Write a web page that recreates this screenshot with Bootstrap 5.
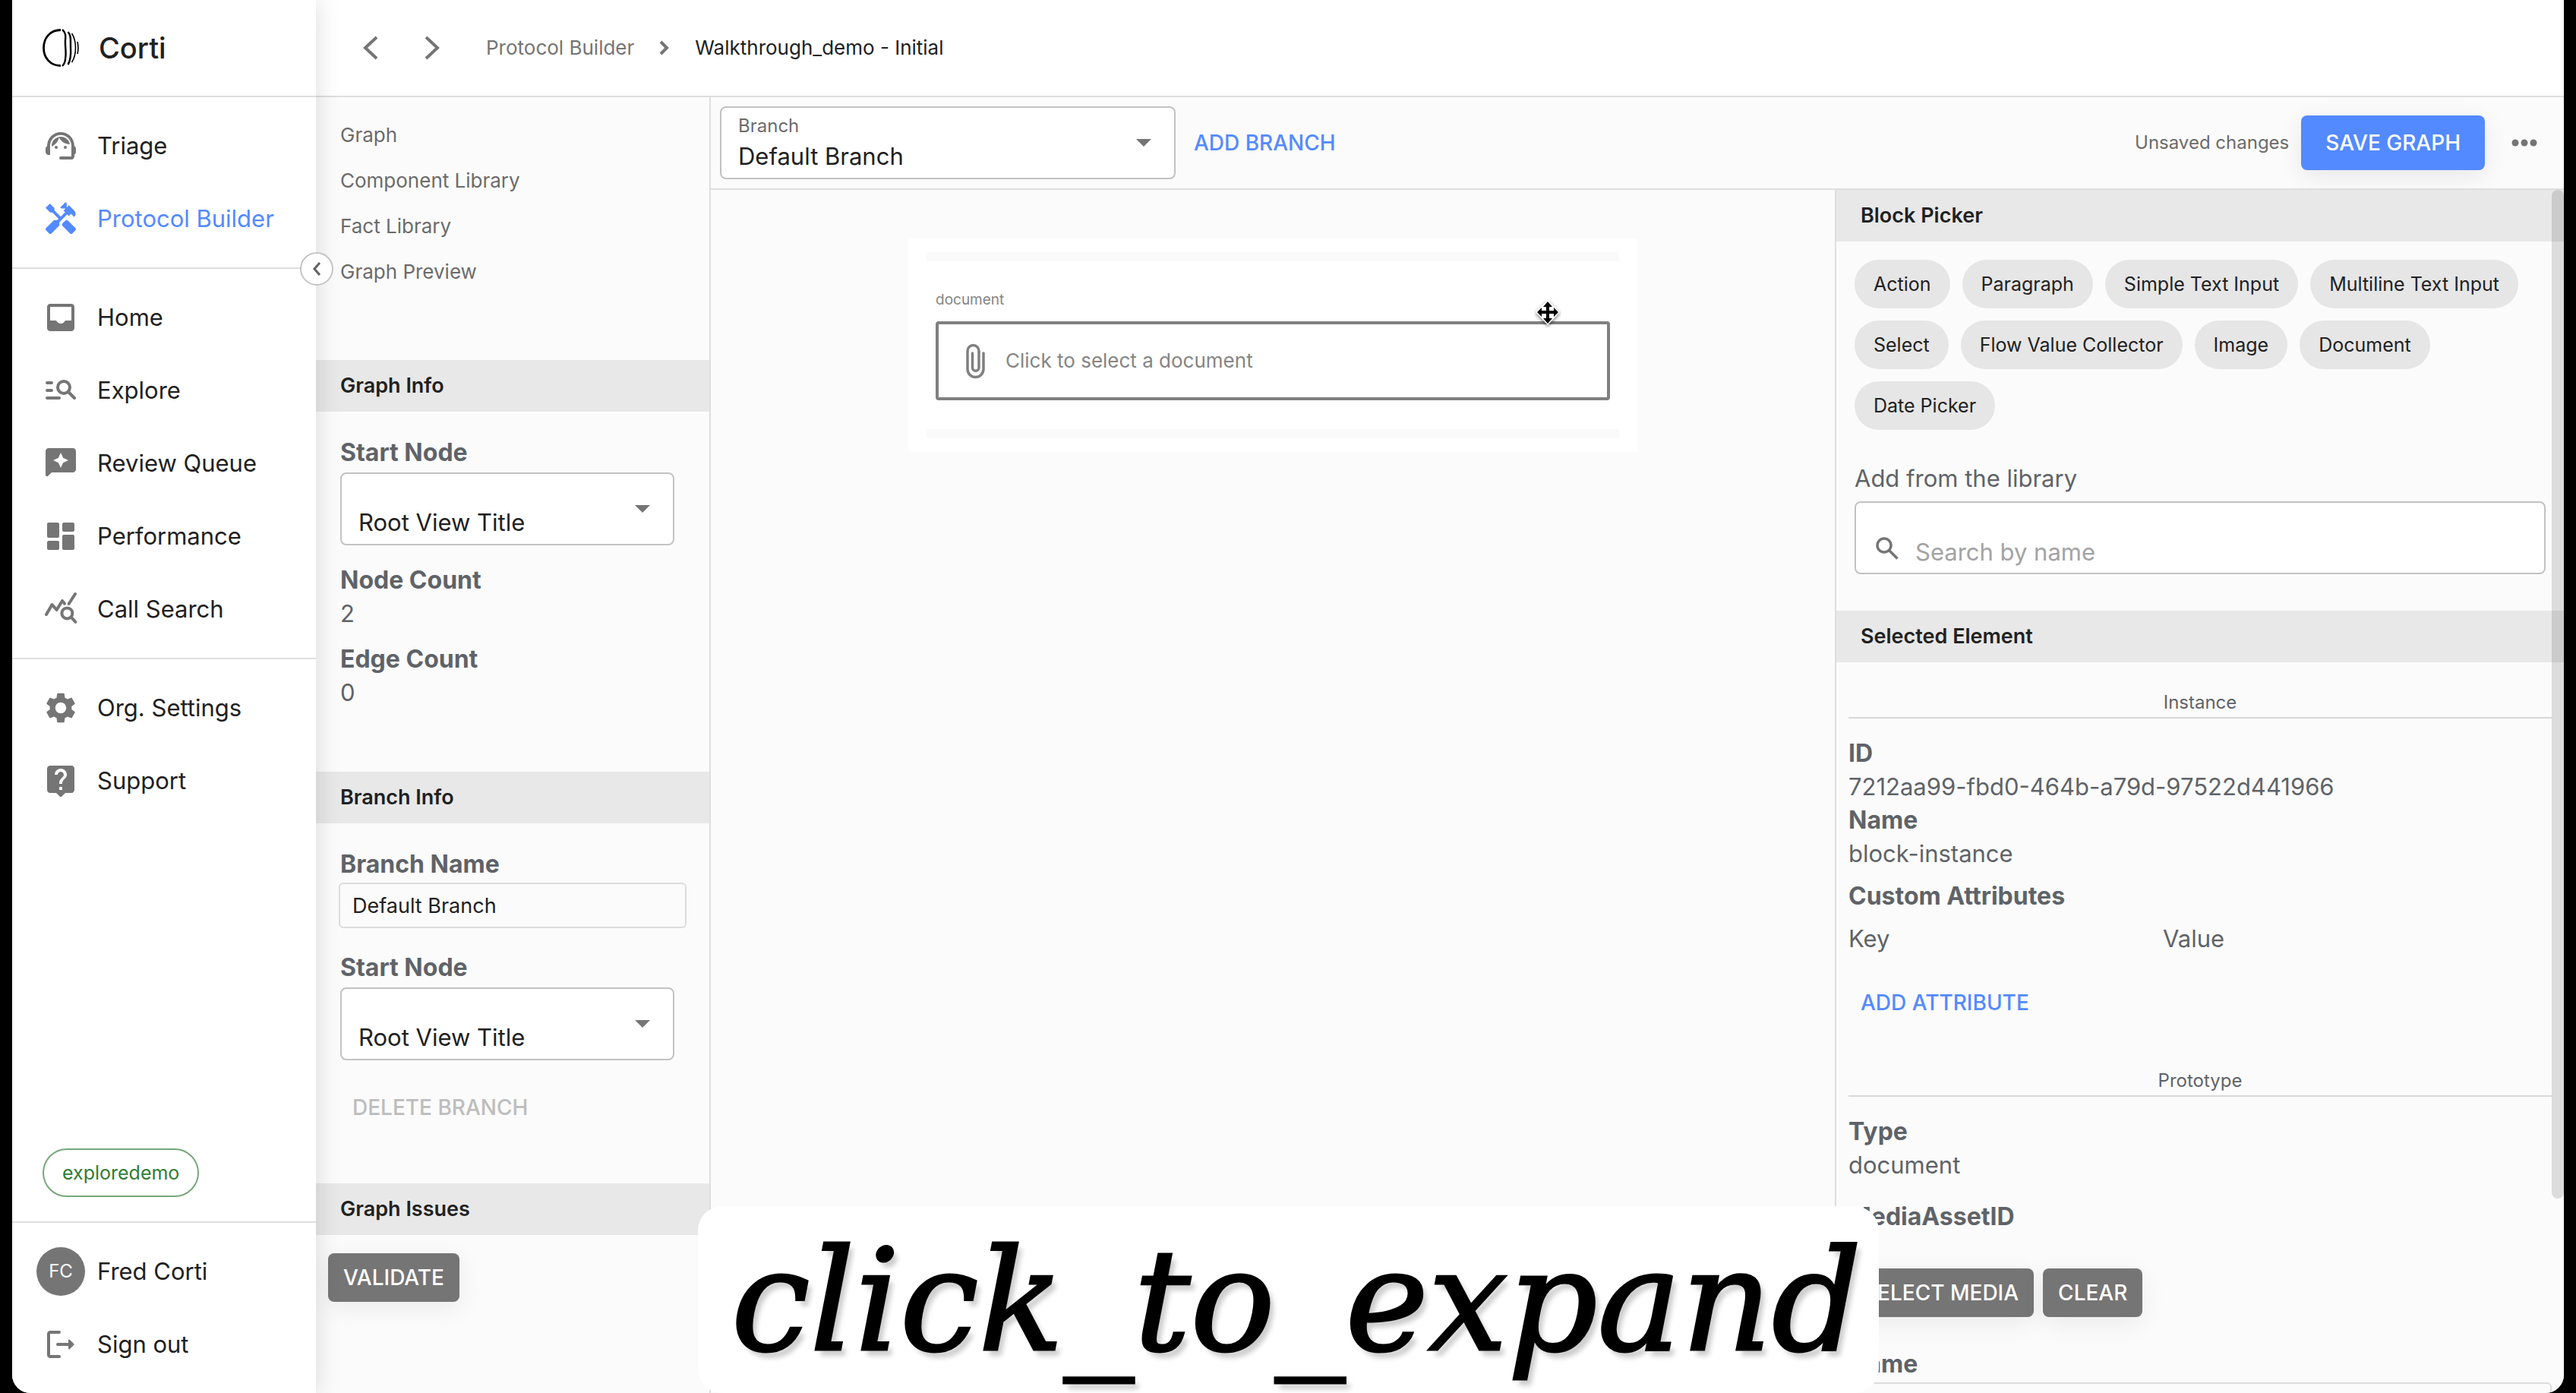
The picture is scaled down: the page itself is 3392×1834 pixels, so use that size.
<!DOCTYPE html>
<html lang="en">
<head>
<meta charset="utf-8">
<meta name="viewport" content="width=device-width, initial-scale=1">
<title>Corti - Protocol Builder</title>
<link href="https://cdn.jsdelivr.net/npm/bootstrap@5.3.0/dist/css/bootstrap.min.css" rel="stylesheet">
<style>
  :root { --ink: #212121; --muted: #757575; --slate: #5f6368; --line: #dedede; --bar: #e8e8e8; --paper: #fbfbfb; --accent: #548aff; }
  body { background: #000; color: var(--ink); font-family: Inter, "Liberation Sans", sans-serif; font-size: 31px; line-height: 44px; }
  a { text-decoration: none; color: inherit; }
  .app { height: 100vh; background: #fff; border-radius: 0 0 24px 24px; }
  .ic { width: 48px; height: 48px; fill: var(--muted); flex: none; }

  /* main navigation */
  .side { width: 400px; z-index: 3; background: #fff; box-shadow: 0 0 32px rgba(0,0,0,.14); }
  .brand { height: 128px; padding: 0 40px; gap: 26px; border-bottom: 2px solid var(--line); font-size: 38px; font-weight: 500; }
  .brand svg { width: 48px; height: 52px; }
  .group { padding: 16px 0; border-bottom: 2px solid var(--line); }
  .account { padding: 16px 0; border-top: 2px solid var(--line); }
  .item { height: 96px; padding: 0 40px; gap: 24px; }
  .item.active { color: var(--accent); }
  .item.active .ic { fill: var(--accent); }
  .tenant { height: 64px; margin: 0 40px 32px; padding: 0 24px; border: 2px solid #76a879; border-radius: 32px; color: #2e7d32; font-size: 25px; }
  .face { width: 64px; height: 64px; margin: 0 -8px; background: var(--muted); color: #fff; font-size: 24px; }
  .collapser { right: -23px; top: 332px; width: 44px; height: 44px; padding: 0; background: #fff; border: 2px solid #c4c4c4; }

  /* top bar */
  .topbar { height: 128px; padding: 0 48px; border-bottom: 2px solid var(--line); font-size: 26px; }
  .icon-btn { padding: 0; border: 0; background: none; line-height: 0; }

  /* shared pieces */
  .pane { background: var(--paper); }
  .bar { height: 68px; padding-left: 32px; background: var(--bar); font-size: 27px; font-weight: 600; line-height: 68px; margin: 0; }
  .field-name { display: block; color: var(--slate); font-size: 32px; font-weight: 700; }
  .value { color: var(--slate); }
  .box { width: 100%; height: 96px; padding: 44px 24px 8px 22px; border: 2px solid #c2c2c2; border-radius: 8px; color: var(--ink); font-size: 31px; line-height: 40px; background-color: #fff; }
  select.box { appearance: none; background-image: url("data:image/svg+xml,%3Csvg xmlns='http://www.w3.org/2000/svg' viewBox='0 0 20 10'%3E%3Cpath fill='%23757575' d='M0 0h20L10 10z'/%3E%3C/svg%3E"); background-repeat: no-repeat; background-size: 20px 10px; background-position: right 30px center; }
  .act { height: 64px; padding: 0 20px; border: 0; border-radius: 8px; font-size: 28px; font-weight: 500; line-height: 64px; }
  .act-link { padding: 0 16px; background: none; color: var(--accent); }
  .act-link:disabled { color: #bdbdbd; }
  .act-gray { background: var(--muted); color: #fff; box-shadow: 0 8px 32px rgba(0,0,0,.07); }
  .act-main { height: 72px; padding: 0 32px; background: var(--accent); color: #fff; box-shadow: 0 8px 32px rgba(0,0,0,.08); }

  /* left pane */
  .left { width: 520px; border-right: 2px solid var(--line); }
  .left nav { padding: 20px 32px 86px; color: #6b6b6b; font-size: 26px; }
  .left nav a { line-height: 60px; }
  .sect { padding: 32px 46px 0 32px; }
  .text-in { height: 60px; padding: 0 16px; border: 2px solid #dcdcdc; border-radius: 6px; background: none; color: var(--ink); font-size: 27px; }

  /* editor */
  .tools { height: 122px; padding: 0 24px 0 12px; border-bottom: 2px solid var(--line); }
  .branch { width: 600px; }
  .branch label { left: 24px; top: 10px; color: #6b6b6b; font-size: 24px; line-height: 32px; }
  .status { color: #6b6b6b; font-size: 24px; }
  .canvas { padding: 64px 0 0; }
  .sheet { width: 960px; padding: 18px 24px; background: #fff; border-radius: 4px; color: #858585; }
  .slot { height: 12px; background: #fafafa; }
  .doc { padding: 36px 12px 38px; }
  .doc label { display: block; font-size: 19px; line-height: 30px; margin-bottom: 13px; }
  .picker { width: 100%; height: 104px; padding: 0 32px; gap: 24px; background: #fff; border: 4px solid #808080; border-radius: 4px; color: #858585; font-size: 26px; }
  .pointer { left: 2004px; top: 392px; width: 36px; height: 40px; z-index: 4; }

  /* right pane */
  .right { width: 960px; border-left: 2px solid var(--line); }
  .chips { padding: 24px 24px 0; gap: 16px; }
  .pill { height: 64px; padding: 0 25px; border: 0; border-radius: 32px; background: #e6e6e6; color: var(--ink); font-size: 25px; }
  .lib { padding: 42px 24px 48px; color: var(--slate); }
  .lib .box { padding-left: 78px; }
  .lib .box::placeholder { color: #a3a3a3; opacity: 1; }
  .lib svg { left: 24px; bottom: 14px; width: 38px; height: 38px; }
  .detail { padding: 0 16px; color: var(--slate); }
  .split { margin: 0 0 24px; padding-bottom: 2px; border-bottom: 2px solid #d8d8d8; font-size: 24px; font-weight: 400; line-height: 34px; text-align: center; }
  .attrs { table-layout: fixed; }
  .attrs th { padding: 0; font-weight: 400; }
  .attrs th:first-child { width: 414px; }
  .thumb { right: 0; top: 250px; width: 16px; height: 1328px; background: rgba(0,0,0,.12); border-radius: 8px; }

  /* caption laid over the page */
  .caption-card { left: 903px; bottom: 0; height: 246px; padding: 0 22px 0 44px; border-radius: 32px; background: #fff; z-index: 5; font-family: "DejaVu Serif", serif; font-style: italic; font-size: 185px; line-height: 250px; color: #000; -webkit-text-stroke: 3px #000; text-shadow: 6px 8px 6px rgba(0,0,0,.2); }
</style>
<script src="https://cdn.jsdelivr.net/npm/bootstrap@5.3.0/dist/js/bootstrap.bundle.min.js"></script>
</head>
<body>
<div class="app position-relative d-flex mx-3 overflow-hidden">

  <aside class="side position-relative d-flex flex-column flex-shrink-0">
    <div class="brand d-flex align-items-center flex-shrink-0">
      <svg viewBox="0 0 48 52" fill="none" stroke="#000"><path d="M24 2.500C10 2.500 1.500 13 1.500 26S10 49.500 24 49.500" stroke-width="2.800"/><path d="M26 2c5 4 4.500 9 4 14s1 14 .5 20-.5 10-4.500 14" stroke-width="2.400"/><path d="M33.500 5c5 5 3 12 3.500 20s.5 17-3.500 23" stroke-width="2.400"/><path d="M38.500 7c4 6 5 11 5 19s-1 13-5 19" stroke-width="1.600"/><path d="M46 18c1.300 6 1.300 11 0 16" stroke-width="1.600"/></svg>
      <span>Corti</span>
    </div>
    <nav class="group d-flex flex-column">
      <a href="#" class="item d-flex align-items-center"><svg class="ic" viewBox="0 0 24 24"><path d="M21 12.220C21 6.730 16.740 3 12 3c-4.690 0-9 3.650-9 9.280-.6.340-1 .980-1 1.720v2c0 1.100.9 2 2 2h1v-6.100c0-3.870 3.130-7 7-7s7 3.130 7 7V19h-7a1 1 0 0 0 0 2h7c1.100 0 2-.9 2-2v-1.220c.59-.31 1-.92 1-1.640v-2.300c0-.7-.41-1.310-1-1.620z"/><circle cx="9" cy="13" r="1"/><circle cx="15" cy="13" r="1"/><path d="M18 11.030C17.520 8.180 15.040 6 12.050 6c-3.030 0-6.290 2.510-6.030 6.450 2.470-1.010 4.330-3.210 4.860-5.890 1.310 2.630 4 4.440 7.120 4.470z"/></svg>Triage</a>
      <a href="#" class="item active d-flex align-items-center"><svg class="ic" viewBox="0 0 24 24"><path d="m21.670 18.170-5.300-5.300h-.99l-2.540 2.540v.99l5.300 5.300c.39.390 1.020.390 1.410 0l2.120-2.120c.39-.38.390-1.020 0-1.410z"/><path d="m17.340 10.190 1.410-1.410 2.120 2.120c1.170-1.170 1.170-3.070 0-4.240l-3.540-3.540-1.410 1.410V1.710l-.7-.71-3.540 3.540.71.710h2.830l-1.410 1.410 1.060 1.060-2.890 2.890-4.130-4.130V5.060L4.830 2.040 2 4.870 5.030 7.900h1.410l4.130 4.130-.85.850H7.600l-5.300 5.300c-.39.390-.39 1.020 0 1.410l2.120 2.120c.39.390 1.020.390 1.410 0l5.300-5.300v-2.120l5.150-5.150 1.060 1.050z"/></svg>Protocol Builder</a>
    </nav>
    <nav class="group d-flex flex-column">
      <a href="#" class="item d-flex align-items-center"><svg class="ic" viewBox="0 0 24 24"><path d="M19 3H5c-1.100 0-2 .9-2 2v14c0 1.100.9 2 2 2h14c1.100 0 2-.9 2-2V5c0-1.100-.9-2-2-2zm0 11h-3.560c-.36 0-.68.190-.86.500A2.990 2.990 0 0 1 12 16c-1.100 0-2.060-.6-2.580-1.500-.18-.31-.5-.5-.86-.5H5V5h14v9z"/></svg>Home</a>
      <a href="#" class="item d-flex align-items-center"><svg class="ic" viewBox="0 0 24 24" style="fill:none" stroke="#757575" stroke-width="2" stroke-linecap="round"><path d="M3 7h3M3 12h3M3 17h8M17 13l4 4"/><circle cx="14" cy="10" r="4"/></svg>Explore</a>
      <a href="#" class="item d-flex align-items-center"><svg class="ic" viewBox="0 0 24 24"><path fill-rule="evenodd" d="M20 2H4c-1.100 0-2 .9-2 2v15.600c0 .9 1.070 1.300 1.700.7L6 18h14c1.100 0 2-.9 2-2V4c0-1.100-.9-2-2-2zm-6.430 9.570L12 15l-1.570-3.430L7 10l3.430-1.570L12 5l1.570 3.430L17 10l-3.430 1.570z"/></svg>Review Queue</a>
      <a href="#" class="item d-flex align-items-center"><svg class="ic" viewBox="0 0 24 24"><rect x="3" y="3" width="8" height="10" rx="1"/><rect x="3" y="15" width="8" height="6" rx="1"/><rect x="13" y="3" width="8" height="6" rx="1"/><rect x="13" y="11" width="8" height="10" rx="1"/></svg>Performance</a>
      <a href="#" class="item d-flex align-items-center"><svg class="ic" viewBox="0 0 24 24" style="fill:none" stroke="#757575" stroke-width="2" stroke-linecap="round" stroke-linejoin="round"><path d="M2.500 15.500 6.300 9l3 3.500L13 6.500l1.500 1.800"/><path d="m17.300 8.500 4.200-6.500M19.200 17.700l2.500 2.700"/><circle cx="16.200" cy="14.700" r="3.500"/></svg>Call Search</a>
    </nav>
    <nav class="d-flex flex-column py-3">
      <a href="#" class="item d-flex align-items-center"><svg class="ic" viewBox="0 0 24 24"><path d="M19.140 12.940c.04-.3.060-.61.060-.94 0-.32-.02-.64-.07-.94l2.030-1.580c.18-.14.230-.41.120-.61l-1.920-3.320c-.12-.22-.37-.29-.59-.22l-2.390.960c-.5-.38-1.030-.7-1.620-.94l-.36-2.540c-.04-.24-.24-.41-.48-.41h-3.840c-.24 0-.43.170-.47.410l-.36 2.540c-.59.240-1.130.570-1.620.940l-2.390-.96c-.22-.08-.47 0-.59.220L2.740 8.870c-.12.210-.08.470.12.610l2.030 1.580c-.05.300-.09.630-.09.940s.02.640.07.940l-2.030 1.580c-.18.140-.23.410-.12.610l1.920 3.320c.12.220.37.290.59.220l2.390-.96c.5.380 1.030.7 1.620.940l.36 2.540c.05.240.24.410.48.410h3.840c.24 0 .44-.17.47-.41l.36-2.540c.59-.24 1.130-.56 1.620-.94l2.390.960c.22.080.47 0 .59-.22l1.920-3.320c.12-.22.070-.47-.12-.61l-2.010-1.580zM12 15.600c-1.980 0-3.600-1.620-3.600-3.600s1.620-3.600 3.600-3.600 3.600 1.620 3.600 3.600-1.620 3.600-3.600 3.600z"/></svg>Org. Settings</a>
      <a href="#" class="item d-flex align-items-center"><svg class="ic" viewBox="0 0 24 24"><path d="M19 2H5c-1.110 0-2 .9-2 2v14c0 1.100.890 2 2 2h4l2.300 2.300c.39.390 1.020.390 1.410 0L15 20h4c1.100 0 2-.9 2-2V4c0-1.100-.9-2-2-2zm-6 16h-2v-2h2v2zm2.070-7.750-.9.920C13.450 11.900 13 12.500 13 14h-2v-.5c0-1.100.45-2.100 1.170-2.830l1.240-1.260c.37-.36.590-.86.590-1.410 0-1.100-.9-2-2-2s-2 .9-2 2H8c0-2.210 1.790-4 4-4s4 1.790 4 4c0 .880-.36 1.680-.93 2.250z"/></svg>Support</a>
    </nav>
    <div class="mt-auto">
      <span class="tenant d-inline-flex align-items-center">exploredemo</span>
      <div class="account d-flex flex-column">
        <a href="#" class="item d-flex align-items-center"><span class="face rounded-circle d-flex align-items-center justify-content-center">FC</span>Fred Corti</a>
        <a href="#" class="item d-flex align-items-center"><svg class="ic" viewBox="0 0 24 24"><path d="M5 5h6a1 1 0 0 0 0-2H5c-1.100 0-2 .9-2 2v14c0 1.100.9 2 2 2h6a1 1 0 0 0 0-2H5z"/><path d="m20.650 11.650-2.790-2.790a.5.5 0 0 0-.86.350V11h-7a1 1 0 0 0 0 2h7v1.790c0 .450.540.670.850.350l2.790-2.790c.2-.19.200-.51.010-.7z"/></svg>Sign out</a>
      </div>
    </div>
    <button class="collapser position-absolute rounded-circle d-flex align-items-center justify-content-center" aria-label="Collapse menu"><svg width="12" height="20" viewBox="0 0 12 20" fill="none" stroke="#616161" stroke-width="3"><path d="m10 2-7 8 7 8"/></svg></button>
  </aside>

  <div class="flex-grow-1 d-flex flex-column overflow-hidden">
    <header class="topbar d-flex align-items-center flex-shrink-0">
      <button class="icon-btn" aria-label="Back"><svg width="48" height="36" viewBox="0 0 48 36" fill="none" stroke="#757575" stroke-width="4"><path d="M32 4 17 18l15 14"/></svg></button>
      <button class="icon-btn ms-4 me-5" aria-label="Forward"><svg width="56" height="36" viewBox="0 0 56 36" fill="none" stroke="#757575" stroke-width="4"><path d="m25 4 15 14-15 14"/></svg></button>
      <a href="#" style="color:#757575">Protocol Builder</a>
      <svg class="mx-4" width="32" height="20" viewBox="0 0 32 20" fill="none" stroke="#757575" stroke-width="4"><path d="m11 2 8 8-8 8"/></svg>
      <span>Walkthrough_demo - Initial</span>
    </header>

    <div class="flex-grow-1 d-flex overflow-hidden">
      <section class="left pane flex-shrink-0">
        <nav class="d-flex flex-column">
          <a href="#">Graph</a><a href="#">Component Library</a><a href="#">Fact Library</a><a href="#">Graph Preview</a>
        </nav>
        <h2 class="bar">Graph Info</h2>
        <div class="sect" style="padding-bottom:82px">
          <label class="field-name mb-1" for="gstart">Start Node</label>
          <select class="box d-block" id="gstart"><option>Root View Title</option></select>
          <div class="field-name mt-4">Node Count</div>
          <div class="value">2</div>
          <div class="field-name mt-3">Edge Count</div>
          <div class="value">0</div>
        </div>
        <h2 class="bar">Branch Info</h2>
        <div class="sect" style="padding-bottom:68px">
          <label class="field-name" for="bname">Branch Name</label>
          <div style="margin:2px -16px 30px -2px"><input class="text-in d-block w-100" id="bname" value="Default Branch"></div>
          <label class="field-name mb-1" for="bstart">Start Node</label>
          <select class="box d-block" id="bstart"><option>Root View Title</option></select>
          <button class="act act-link d-block" style="margin-top:30px" disabled>DELETE BRANCH</button>
        </div>
        <h2 class="bar">Graph Issues</h2>
        <button class="act act-gray mt-4 ms-3">VALIDATE</button>
      </section>

      <main class="flex-grow-1 d-flex flex-column overflow-hidden pane">
        <div class="tools d-flex align-items-center flex-shrink-0">
          <div class="branch position-relative me-2">
            <label class="position-absolute" for="branch">Branch</label>
            <select class="box d-block" id="branch"><option>Default Branch</option></select>
          </div>
          <button class="act act-link">ADD BRANCH</button>
          <span class="status ms-auto me-3">Unsaved changes</span>
          <button class="act act-main">SAVE GRAPH</button>
          <button class="icon-btn ms-4" aria-label="More"><svg width="56" height="48" viewBox="0 0 56 48" fill="#757575"><circle cx="16" cy="24" r="4.500"/><circle cx="28" cy="24" r="4.500"/><circle cx="40" cy="24" r="4.500"/></svg></button>
        </div>

        <div class="flex-grow-1 d-flex overflow-hidden">
          <section class="canvas flex-grow-1">
            <div class="sheet mx-auto">
              <div class="slot"></div>
              <div class="doc">
                <label for="docpick">document</label>
                <button class="picker d-flex align-items-center" id="docpick"><svg width="32" height="48" viewBox="0 0 32 48" fill="none" stroke="#808080" stroke-width="3.500" stroke-linecap="round"><path d="M27 14v21a10.500 10.500 0 0 1-21 0V11a7.500 7.500 0 0 1 15 0v22a4.200 4.200 0 0 1-8.500 0V14"/></svg>Click to select a document</button>
              </div>
              <div class="slot"></div>
            </div>
          </section>

          <aside class="right flex-shrink-0">
            <h2 class="bar">Block Picker</h2>
            <div class="chips d-flex flex-wrap">
              <button class="pill">Action</button><button class="pill">Paragraph</button><button class="pill">Simple Text Input</button><button class="pill">Multiline Text Input</button><button class="pill">Select</button><button class="pill">Flow Value Collector</button><button class="pill">Image</button><button class="pill">Document</button><button class="pill">Date Picker</button>
            </div>
            <div class="lib">
              <label class="mb-2" for="lib">Add from the library</label>
              <div class="position-relative">
                <input class="box d-block" id="lib" placeholder="Search by name">
                <svg class="position-absolute" viewBox="0 0 38 38" fill="none" stroke="#757575" stroke-width="3.500"><circle cx="15" cy="14" r="9"/><path d="m21.500 20.500 11 11"/></svg>
              </div>
            </div>
            <h2 class="bar">Selected Element</h2>
            <div class="detail">
              <h3 class="split" style="margin-top:36px">Instance</h3>
              <div class="field-name">ID</div>
              <div>7212aa99-fbd0-464b-a79d-97522d441966</div>
              <div class="field-name">Name</div>
              <div>block-instance</div>
              <div class="field-name" style="margin:12px 0">Custom Attributes</div>
              <table class="attrs w-100"><thead><tr><th>Key</th><th>Value</th></tr></thead></table>
              <button class="act act-link d-block" style="margin:30px 0 54px">ADD ATTRIBUTE</button>
              <h3 class="split">Prototype</h3>
              <div class="field-name">Type</div>
              <div>document</div>
              <div class="field-name mt-4">MediaAssetID</div>
              <div class="d-flex" style="gap:12px;margin:46px 0 40px"><button class="act act-gray">SELECT MEDIA</button><button class="act act-gray">CLEAR</button></div>
              <label class="field-name" for="mname">Name</label>
              <input class="text-in d-block w-100" style="margin-top:2px" id="mname">
            </div>
          </aside>
        </div>
      </main>
    </div>
  </div>

  <div class="thumb position-absolute"></div>
  <svg class="pointer position-absolute" viewBox="0 0 36 40"><path d="M18 2 34 19 18 36 2 19z" fill="#fff" style="filter:drop-shadow(0 2px 2px rgba(0,0,0,.5))"/><path d="M18 5l6 7h-4v5h6v-4l6 6-6 6v-4h-6v6h4l-6 7-6-7h4v-6h-6v4l-6-6 6-6v4h6v-5h-4z"/></svg>
  <div class="caption-card position-absolute">click_to_expand</div>
</div>
</body>
</html>
